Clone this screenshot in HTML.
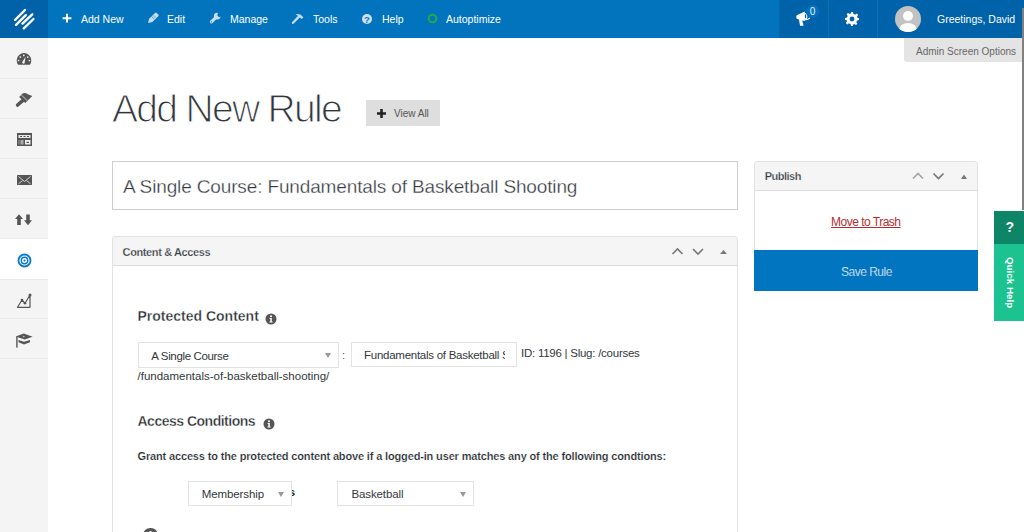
<!DOCTYPE html>
<html><head><meta charset="utf-8">
<style>
*{margin:0;padding:0;box-sizing:border-box}
html,body{width:1024px;height:532px;overflow:hidden;background:#fff;font-family:"Liberation Sans",sans-serif}
.a{position:absolute}
.t{position:absolute;white-space:nowrap;line-height:1}
#topbar{left:0;top:0;width:1024px;height:38px;background:#0274be}
#logo{left:0;top:0;width:48px;height:38px;background:#0262a9}
.tb{color:#fff;font-size:10.5px}
.dk{top:0;height:38px;background:#0062a8}
#side{left:0;top:38px;width:48px;height:494px;background:#f4f4f4}
.sep{left:0;width:48px;height:1px;background:#ebe9e9}
.box{border:1px solid #e2e2e2;background:#fff}
.hdr{background:#f5f5f5;border-bottom:1px solid #dcdcdc}
.sel{border:1px solid #e3e3e3;background:#fff}
.arr{width:0;height:0;border-left:3px solid transparent;border-right:3px solid transparent;border-top:5px solid #999}
</style></head><body>
<!-- top bar -->
<div id="topbar" class="a"></div>
<div id="logo" class="a"></div>
<svg class="a" style="left:0;top:0" width="48" height="38" viewBox="0 0 48 38">
<g stroke="#fff" stroke-width="2.4" stroke-linecap="round">
<line x1="15" y1="20" x2="25" y2="10"/>
<line x1="16" y1="24.8" x2="25.8" y2="15.2"/>
<line x1="22.5" y1="23.6" x2="32.3" y2="14.3"/>
<line x1="23.8" y1="28.3" x2="33.5" y2="19"/>
</g></svg>

<!-- menu items -->
<svg class="a" style="left:62px;top:13px" width="10" height="10" viewBox="0 0 10 10"><path d="M4 0.8h2v3.4h3.4v2H6v3.4H4V6.2H0.6v-2H4z" fill="#fff"/></svg>
<div class="t tb" style="left:81px;top:13.7px">Add New</div>
<svg class="a" style="left:140px;top:6px" width="26" height="24" viewBox="0 0 26 24"><path d="M8 17L9.1 12.7 15 6.9Q15.8 6.1 16.6 6.9L18.3 8.6Q19.1 9.4 18.3 10.2L12.4 16Z" fill="#c6dcf0"/><g fill="#4f98d6"><circle cx="12.6" cy="11.4" r="0.6"/><circle cx="14" cy="10" r="0.6"/><circle cx="13.8" cy="12.6" r="0.6"/><circle cx="15.2" cy="11.2" r="0.6"/><circle cx="12.8" cy="9.0" r="0.5"/><circle cx="11.6" cy="10.2" r="0.5"/></g></svg>
<div class="t tb" style="left:167px;top:13.7px">Edit</div>
<svg class="a" style="left:204px;top:6px" width="26" height="24" viewBox="0 0 26 24"><path d="M7.4 15.8L12.2 11.1" stroke="#c6dcf0" stroke-width="3.2" stroke-linecap="round"/><path fill="#c6dcf0" d="M13.5 6.8A3.4 3.4 0 1 0 16.6 10.6L15.1 11.2 13.3 9.6 13.9 7.6Z"/><circle cx="7.4" cy="15.9" r="0.7" fill="#2f86cc"/></svg>
<div class="t tb" style="left:230px;top:13.7px">Manage</div>
<svg class="a" style="left:286px;top:6px" width="26" height="24" viewBox="0 0 26 24"><path d="M7 16.8L13.2 10.4" stroke="#c6dcf0" stroke-width="2.3" stroke-linecap="round"/><path fill="#c6dcf0" d="M9.4 8.5Q12 7.4 14.4 8.6L17.4 11.2 15.8 12.9 13.9 11.6 12.5 10.3Q11.3 9.1 9.4 8.5Z"/></svg>
<div class="t tb" style="left:313px;top:13.7px">Tools</div>
<svg class="a" style="left:362px;top:13.5px" width="10" height="10" viewBox="0 0 10 10"><circle cx="5" cy="5" r="5" fill="#cfe0ef"/><text x="5" y="8.6" font-size="9.5" font-weight="bold" text-anchor="middle" fill="#0274be" font-family="Liberation Sans">?</text></svg>
<div class="t tb" style="left:382px;top:13.7px">Help</div>
<svg class="a" style="left:427px;top:13px" width="11" height="11" viewBox="0 0 11 11"><circle cx="5.5" cy="5.5" r="3.8" stroke="#26a84a" stroke-width="2" fill="none"/></svg>
<div class="t tb" style="left:446px;top:13.7px">Autoptimize</div>

<!-- right dark sections -->
<div class="a dk" style="left:779px;width:49px"></div>
<div class="a dk" style="left:829px;width:48px"></div>
<div class="a dk" style="left:878px;width:146px"></div>
<svg class="a" style="left:792px;top:4px" width="30" height="22" viewBox="0 0 30 22">
<path d="M4.3 12.5Q4.2 11.4 5.4 11.1L12.8 7.6 12.8 17 10.2 16.4 11.6 21.7 8.1 21.7 6.9 15.4 5.4 15Q4.3 14.6 4.3 13.5Z" fill="#fff"/>
<ellipse cx="13.3" cy="12.3" rx="1.5" ry="2.7" fill="none" stroke="#fff" stroke-width="1.1"/>
<path d="M13.4 15.6Q15.8 15.9 17.6 14.2" stroke="#fff" stroke-width="1.1" fill="none" stroke-linecap="round"/>
<circle cx="20.6" cy="7.5" r="6.8" fill="#0270bd"/>
<text x="20.6" y="10.9" font-size="10" text-anchor="middle" fill="#e8f0f8" font-family="Liberation Sans">0</text>
</svg>
<svg class="a" style="left:845px;top:12px" width="14" height="14" viewBox="0 0 14 14">
<path fill="#fff" fill-rule="evenodd" d="M6 0h2l0.4 2a5 5 0 0 1 1.6 0.7l1.7-1.1 1.4 1.4-1.1 1.7a5 5 0 0 1 0.7 1.6L14 6v2l-2 0.4a5 5 0 0 1-0.7 1.6l1.1 1.7-1.4 1.4-1.7-1.1a5 5 0 0 1-1.6 0.7L8 14H6l-0.4-2a5 5 0 0 1-1.6-0.7l-1.7 1.1-1.4-1.4 1.1-1.7a5 5 0 0 1-0.7-1.6L0 8V6l2-0.4a5 5 0 0 1 0.7-1.6L1.6 2.3 3 0.9l1.7 1.1A5 5 0 0 1 6.3 1.3zM7 4.6a2.4 2.4 0 1 0 0 4.8 2.4 2.4 0 1 0 0-4.8z"/>
</svg>
<svg class="a" style="left:895px;top:6px" width="26" height="26" viewBox="0 0 26 26">
<defs><clipPath id="cc"><circle cx="13" cy="13" r="13"/></clipPath></defs>
<circle cx="13" cy="13" r="13" fill="#c2c2c2"/>
<g clip-path="url(#cc)" fill="#fff"><circle cx="13" cy="10" r="5"/><ellipse cx="13" cy="24" rx="9" ry="7"/></g>
</svg>
<div class="t tb" style="left:937px;top:13.7px">Greetings, David</div>

<!-- admin screen options tab -->
<div class="a" style="left:904px;top:38px;width:118px;height:24px;background:#e4e4e4;border-bottom-left-radius:3px"></div>
<div class="t" style="left:916px;top:46.5px;font-size:10px;color:#666">Admin Screen Options</div>
<div class="a" style="left:1022px;top:8px;width:2px;height:202px;background:#808080"></div>

<!-- sidebar -->
<div id="side" class="a"></div>
<div class="a" style="left:0;top:239px;width:48px;height:40px;background:#fff"></div>
<div class="a sep" style="top:78px"></div>
<div class="a sep" style="top:118px"></div>
<div class="a sep" style="top:158px"></div>
<div class="a sep" style="top:198px"></div>
<div class="a sep" style="top:238px"></div>
<div class="a sep" style="top:279px"></div>
<div class="a sep" style="top:318px"></div>
<div class="a sep" style="top:358px"></div>

<!-- sidebar icons -->
<svg class="a" style="left:16px;top:52px" width="16" height="14" viewBox="0 0 16 14">
<path d="M2.1 12.7A7.3 7.3 0 1 1 13.9 12.7Z" fill="#555"/>
<g fill="#f3f3f3"><circle cx="7.8" cy="3.4" r="0.85"/><circle cx="4.4" cy="5.1" r="0.85"/><circle cx="11.8" cy="5.1" r="0.85"/><circle cx="2.6" cy="8.5" r="0.85"/><circle cx="13.4" cy="8.5" r="0.85"/><path d="M9.6 4.8L8.7 10.2A1.25 1.25 0 1 1 6.4 9.7Z"/></g>
</svg>
<svg class="a" style="left:14px;top:90px" width="20" height="18" viewBox="0 0 20 18">
<path d="M5.2 6.9L8.2 3.8Q10 2.5 12 3.2Q15 4.5 18.3 6.1L13.6 10.8 11.3 12.9Z" fill="#555"/>
<path d="M9.2 10.2L3.6 15" stroke="#555" stroke-width="3.6" stroke-linecap="round"/>
<path d="M7.3 4.9L13.4 10.8" stroke="#f3f3f3" stroke-width="0.7"/>
</svg>
<svg class="a" style="left:17px;top:133px" width="15" height="13" viewBox="0 0 15 13">
<rect x="0" y="0" width="15" height="13" fill="#555"/>
<rect x="1.5" y="2" width="12" height="3" fill="#e8e8e8"/>
<rect x="3" y="3" width="2" height="1" fill="#555"/><rect x="6.5" y="3" width="2" height="1" fill="#555"/><rect x="10" y="3" width="2" height="1" fill="#555"/>
<rect x="1.5" y="7" width="1" height="4.5" fill="#999"/><rect x="3.5" y="7" width="3" height="4.5" fill="#aaa"/>
<rect x="8" y="7" width="5.5" height="4.5" fill="#eee"/><rect x="9.5" y="8.8" width="2.5" height="1.2" fill="#555"/>
</svg>
<svg class="a" style="left:17px;top:175px" width="15" height="10" viewBox="0 0 15 10">
<rect x="0" y="0" width="15" height="10" rx="0.5" fill="#555"/>
<path d="M1.5 1.5l6 5 6-5M1.5 8.8l4-3.2M13.5 8.8l-4-3.2" stroke="#f3f3f3" stroke-width="0.8" fill="none"/>
</svg>
<svg class="a" style="left:14px;top:214px" width="19" height="12" viewBox="0 0 19 12">
<path d="M5 0.2L9 5H6.8v6H3.2V5H1z" fill="#555"/>
<path d="M14 11.2L18 6.2H15.8V0.5h-3.6v5.7H10z" fill="#555"/>
</svg>
<svg class="a" style="left:17px;top:253px" width="15" height="15" viewBox="0 0 15 15">
<circle cx="7.5" cy="7.5" r="6" stroke="#0b78cc" stroke-width="1.8" fill="none"/>
<circle cx="7.5" cy="7.5" r="3.2" stroke="#0b78cc" stroke-width="1.4" fill="none"/>
<circle cx="7.5" cy="7.5" r="1.1" fill="#0b78cc"/>
</svg>
<svg class="a" style="left:16px;top:292px" width="16" height="17" viewBox="0 0 16 17">
<path d="M1.5 15.3L6 8l3 3.3 5-8.3V15.3z" stroke="#555" stroke-width="1.2" fill="none" stroke-linejoin="round"/>
<circle cx="14" cy="3" r="1.5" fill="#555"/><circle cx="6" cy="8" r="1.3" fill="#555"/><circle cx="9" cy="11.3" r="1.3" fill="#555"/>
</svg>
<svg class="a" style="left:15px;top:333px" width="19" height="16" viewBox="0 0 19 16">
<path d="M0.6 3.6L8.8 0.5 17.6 3.8 9.7 6.4Z" fill="#555"/>
<circle cx="8.8" cy="3.6" r="0.8" fill="#ccc"/>
<path d="M3.5 7L9 8.8 15 7 15 9.3 9 11.5 3.5 9.3Z" fill="#555"/>
<rect x="1.2" y="3.8" width="1.4" height="10.8" fill="#555"/>
</svg>

<!-- title -->
<div class="t" style="left:112px;top:89.4px;font-size:39px;letter-spacing:-1.7px;color:#32373c;-webkit-text-stroke:1.1px #fff">Add New Rule</div>
<div class="a" style="left:366px;top:100px;width:74px;height:26px;background:#dedede"></div>
<svg class="a" style="left:377px;top:109px" width="9" height="9" viewBox="0 0 9 9"><path d="M3.2 0h2.6v3.2H9v2.6H5.8V9H3.2V5.8H0V3.2h3.2z" fill="#222"/></svg>
<div class="t" style="left:394px;top:108.5px;font-size:10px;color:#555">View All</div>

<!-- title input -->
<div class="a" style="left:112px;top:161px;width:626px;height:49px;border:1px solid #cfcfcf;background:#fff"></div>
<div class="t" style="left:123px;top:176.9px;font-size:19px;letter-spacing:-0.14px;color:#32373c;-webkit-text-stroke:0.3px #fff">A Single Course: Fundamentals of Basketball Shooting</div>

<!-- content & access box -->
<div class="a box" style="left:112px;top:236px;width:626px;height:320px;border-radius:3px 3px 0 0"></div>
<div class="a hdr" style="left:113px;top:237px;width:624px;height:29px;border-radius:3px 3px 0 0"></div>
<div class="t" style="left:122.6px;top:247px;font-size:11px;font-weight:bold;letter-spacing:-0.38px;color:#32373c;-webkit-text-stroke:0.25px #f5f5f5">Content &amp; Access</div>
<svg class="a" style="left:670px;top:246px" width="60" height="10" viewBox="0 0 60 10">
<path d="M2.5 8L7.5 3l5 5M23 3l5 5 5-5" stroke="#72777c" stroke-width="1.6" fill="none"/>
<path d="M50 8h7l-3.5-4z" fill="#72777c"/>
</svg>

<div class="t" style="left:137.5px;top:308.75px;font-size:14px;font-weight:bold;color:#23282d;-webkit-text-stroke:0.35px #fff">Protected Content</div>
<svg class="a" style="left:265px;top:313px" width="12" height="12" viewBox="0 0 12 12"><circle cx="6" cy="6" r="5.5" fill="#555"/><circle cx="6" cy="3.3" r="1" fill="#fff"/><path d="M4.6 5h2.2v3.6h0.8v1H4.5v-1h0.8V6H4.6z" fill="#fff"/></svg>

<div class="a sel" style="left:138px;top:342px;width:201px;height:26px"></div>
<div class="t" style="left:151.3px;top:350.6px;font-size:11.5px;letter-spacing:-0.35px;color:#32373c">A Single Course</div>
<div class="a arr" style="left:324.5px;top:353px"></div>
<div class="t" style="left:342px;top:349.5px;font-size:11px;color:#555">:</div>
<div class="a sel" style="left:351px;top:342px;width:166px;height:25px"></div>
<div class="a" style="left:352px;top:343px;width:153px;height:23px;overflow:hidden">
<div class="t" style="left:12px;top:6.5px;font-size:11.5px;letter-spacing:-0.26px;color:#32373c">Fundamentals of Basketball Shooting</div>
</div>
<div class="t" style="left:521px;top:348px;font-size:11.5px;letter-spacing:-0.25px;color:#32373c">ID: 1196 | Slug: /courses</div>
<div class="t" style="left:137.5px;top:371.2px;font-size:11.5px;color:#32373c">/fundamentals-of-basketball-shooting/</div>

<div class="t" style="left:137.5px;top:414.25px;font-size:14px;font-weight:bold;letter-spacing:-0.5px;color:#23282d;-webkit-text-stroke:0.35px #fff">Access Conditions</div>
<svg class="a" style="left:263px;top:418px" width="12" height="12" viewBox="0 0 12 12"><circle cx="6" cy="6" r="5.5" fill="#555"/><circle cx="6" cy="3.3" r="1" fill="#fff"/><path d="M4.6 5h2.2v3.6h0.8v1H4.5v-1h0.8V6H4.6z" fill="#fff"/></svg>

<div class="t" style="left:137.5px;top:451.2px;font-size:11px;font-weight:bold;letter-spacing:-0.15px;color:#23282d;-webkit-text-stroke:0.2px #fff">Grant access to the protected content above if a logged-in user matches any of the following condtions:</div>

<div class="t" style="left:289px;top:486.8px;font-size:11px;font-weight:bold;color:#23282d">s</div>
<div class="a sel" style="left:188px;top:481px;width:104px;height:25px"></div>
<div class="t" style="left:201.7px;top:489.2px;font-size:11.5px;letter-spacing:-0.1px;color:#32373c">Membership</div>
<div class="a arr" style="left:277.5px;top:492px"></div>
<div class="a sel" style="left:337px;top:481px;width:137px;height:25px"></div>
<div class="t" style="left:351.4px;top:489.2px;font-size:11.5px;letter-spacing:-0.1px;color:#32373c">Basketball</div>
<div class="a arr" style="left:460px;top:492px"></div>

<div class="a" style="left:143px;top:528px;width:14.5px;height:14.5px;border-radius:50%;background:#555"></div>
<div class="a" style="left:149px;top:530.5px;width:2.5px;height:2px;border-radius:1px;background:#ddd"></div>

<!-- publish box -->
<div class="a box" style="left:754px;top:161px;width:224px;height:130px;border-radius:3px 3px 0 0"></div>
<div class="a hdr" style="left:755px;top:162px;width:222px;height:29px;border-radius:3px 3px 0 0"></div>
<div class="t" style="left:764.7px;top:170.9px;font-size:11px;font-weight:bold;letter-spacing:-0.5px;color:#32373c;-webkit-text-stroke:0.25px #f5f5f5">Publish</div>
<svg class="a" style="left:910px;top:170px" width="60" height="12" viewBox="0 0 60 12">
<path d="M3 8.5l5-5 5 5" stroke="#a0a5aa" stroke-width="1.6" fill="none"/>
<path d="M23.5 3.5l5 5 5-5" stroke="#72777c" stroke-width="1.6" fill="none"/>
<path d="M51 9h6l-3-4.5z" fill="#72777c"/>
</svg>
<div class="t" style="left:831px;top:216px;font-size:12px;letter-spacing:-0.5px;color:#b32d2e;text-decoration:underline">Move to Trash</div>
<div class="a" style="left:754px;top:250px;width:224px;height:41px;background:#0275c0"></div>
<div class="t" style="left:841px;top:265.7px;font-size:12px;letter-spacing:-0.5px;color:#e8f0f7;-webkit-text-stroke:0.2px #0275c0">Save Rule</div>

<!-- quick help -->
<div class="a" style="left:994px;top:211px;width:30px;height:33px;background:#0d8566"></div>
<div class="a" style="left:994px;top:244px;width:30px;height:77px;background:#1dc291"></div>
<div class="t" style="left:1005.5px;top:220px;font-size:14px;font-weight:bold;color:#fff">?</div>
<div class="t" style="left:1015px;top:256.5px;font-size:9.8px;font-weight:bold;color:#fff;transform-origin:0 0;transform:rotate(90deg)">Quick Help</div>
</body></html>
